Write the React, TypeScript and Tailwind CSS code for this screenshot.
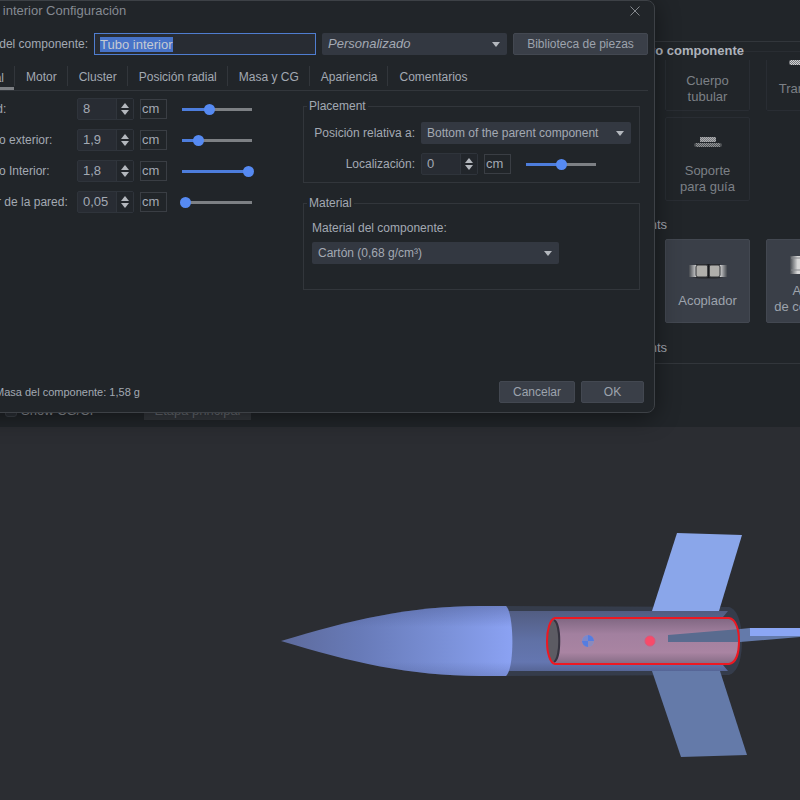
import { useEffect, useRef, useState } from 'react';
import type { ReactNode } from 'react';

interface SelectBoxProps {
  id: string;
  options: string[];
  className?: string;
  label?: string;
}

function SelectBox({ id, options, className = '', label }: SelectBoxProps) {
  return (
    <div className={`relative ${className}`}>
      <select
        id={id}
        aria-label={label}
        className="block h-[22px] w-full appearance-none rounded-[2px] bg-[#333841] pl-1.5 pr-5 outline-none"
      >
        {options.map((option) => (
          <option key={option}>{option}</option>
        ))}
      </select>
      <svg
        viewBox="0 0 8 5"
        className="pointer-events-none absolute right-[7px] top-[9px] h-[5px] w-2 fill-[#b4b8be]"
      >
        <path d="M0 0h8L4 5z" />
      </svg>
    </div>
  );
}

interface MeasureFieldProps {
  id: string;
  label: string;
  value: string;
  position: number;
}

function MeasureField({ id, label, value, position }: MeasureFieldProps) {
  const [text, setText] = useState(value);
  const [level, setLevel] = useState(position);

  return (
    <div className="flex h-[22px] items-center text-[13px]">
      <div className="flex h-[22px] w-[57px] rounded-[2px] border border-[#2f343b] bg-[#282c33]">
        <input
          id={id}
          type="text"
          value={text}
          onChange={(e) => setText(e.target.value)}
          className="w-[38px] bg-transparent pl-[5px] outline-none"
        />
        <div className="flex flex-1 flex-col items-center justify-center gap-0.5 border-l border-[#30353c] bg-[#22262b]">
          <button type="button" aria-label={`${label} +`}>
            <svg viewBox="0 0 8 5" className="block h-[5px] w-2 fill-[#b4b8be]">
              <path d="M0 5h8L4 0z" />
            </svg>
          </button>
          <button type="button" aria-label={`${label} -`}>
            <svg viewBox="0 0 8 5" className="block h-[5px] w-2 fill-[#b4b8be]">
              <path d="M0 0h8L4 5z" />
            </svg>
          </button>
        </div>
      </div>
      <button
        type="button"
        className="ml-1.5 h-5 w-[27px] border border-[#3a3e44] pl-px text-left"
      >
        cm
      </button>
      <input
        type="range"
        min={0}
        max={100}
        value={level}
        aria-label={label}
        onChange={(e) => setLevel(Number(e.target.value))}
        className="ml-[13px] h-[11px] w-[74px] appearance-none bg-[length:70px_3px] bg-center bg-no-repeat outline-none [&::-webkit-slider-thumb]:h-[11px] [&::-webkit-slider-thumb]:w-[11px] [&::-webkit-slider-thumb]:appearance-none [&::-webkit-slider-thumb]:rounded-full [&::-webkit-slider-thumb]:bg-[#568af2]"
        style={{
          backgroundImage: `linear-gradient(to right, #4d7ddc ${level}%, #7d8084 ${level}%)`,
        }}
      />
    </div>
  );
}

const measures = [
  { id: 'length', label: 'Longitud:', value: '8', position: 38 },
  { id: 'outer', label: 'Diámetro exterior:', value: '1,9', position: 20 },
  { id: 'inner', label: 'Diámetro Interior:', value: '1,8', position: 100 },
  { id: 'wall', label: 'Espesor de la pared:', value: '0,05', position: 0 },
];

const tabs = ['Motor', 'Cluster', 'Posición radial', 'Masa y CG', 'Apariencia', 'Comentarios'];

function ConfigDialog() {
  const nameRef = useRef<HTMLInputElement>(null);

  useEffect(() => {
    nameRef.current?.focus();
    nameRef.current?.select();
  }, []);

  return (
    <div
      role="dialog"
      aria-label="Tubo interior Configuración"
      className="absolute -left-[58px] right-[145px] top-0 rounded-lg border border-[#3d4146] bg-[#212529] pb-[9px] pl-[9px] pr-1.5 text-xs shadow-[0_4px_24px_rgba(0,0,0,0.45)]"
    >
      <div className="flex h-5 items-center justify-between pl-[18px] text-[13px] text-[#858a92]">
        <h1>Tubo interior Configuración</h1>
        <button type="button" aria-label="Cerrar" className="mr-2">
          <svg viewBox="0 0 10 10" className="h-2.5 w-2.5 stroke-[#84888d]" fill="none">
            <path d="M0.5 0.5l9 9M9.5 0.5l-9 9" />
          </svg>
        </button>
      </div>

      <div className="mt-3 flex items-center gap-1.5">
        <label htmlFor="name" className="flex w-[136px] justify-end whitespace-nowrap">
          Nombre del componente:
        </label>
        <input
          id="name"
          ref={nameRef}
          type="text"
          defaultValue="Tubo interior"
          className="h-[22px] min-w-0 flex-1 border border-[#4f7dd0] bg-[#282c33] px-[5px] text-[13px] outline-none selection:bg-[#4773c8] selection:text-[#c5cad2]"
        />
        <SelectBox
          id="preset"
          label="Personalizado"
          options={['Personalizado']}
          className="w-[185px] text-[13px] italic"
        />
        <button
          type="button"
          className="h-[22px] w-[135px] rounded-[2px] border border-[#434851] bg-[#3a3f48] text-[#9da3ad]"
        >
          Biblioteca de piezas
        </button>
      </div>

      <div role="tablist" className="mt-[11px] flex h-[25px] border-b border-[#32363b]">
        <button
          type="button"
          role="tab"
          aria-selected="true"
          className="w-[62px] border-b-[3px] border-[#7d8084] pr-2.5 pt-0.5 text-right"
        >
          General
        </button>
        {tabs.map((tab) => (
          <button
            key={tab}
            type="button"
            role="tab"
            aria-selected="false"
            className="mb-1 border-l border-[#32363b] pl-[11px] pr-2.5 pt-0.5"
          >
            {tab}
          </button>
        ))}
      </div>

      <div className="flex items-start justify-between pr-2 pt-[7px]">
        <div className="grid grid-cols-[114px_auto] items-center gap-x-1.5 gap-y-[9px] pl-[5px]">
          {measures.map((m) => (
            <div key={m.id} className="contents">
              <label htmlFor={m.id} className="whitespace-nowrap">
                {m.label}
              </label>
              <MeasureField {...m} />
            </div>
          ))}
        </div>

        <div className="w-[337px]">
          <fieldset className="border border-[#32363b] px-[7px] pb-[7px]">
            <legend className="-ml-1 px-0.5">Placement</legend>
            <div className="grid grid-cols-[104px_1fr] items-center gap-x-1.5 gap-y-[9px] pt-2">
              <label htmlFor="relative" className="whitespace-nowrap text-right">
                Posición relativa a:
              </label>
              <SelectBox
                id="relative"
                options={['Bottom of the parent component']}
                className="w-[210px]"
              />
              <label htmlFor="location" className="text-right">
                Localización:
              </label>
              <MeasureField id="location" label="Localización:" value="0" position={50} />
            </div>
          </fieldset>

          <fieldset className="mt-3 border border-[#32363b] px-2 pb-[25px]">
            <legend className="-ml-[5px] px-0.5">Material</legend>
            <label htmlFor="material" className="block pt-[9px]">
              Material del componente:
            </label>
            <SelectBox
              id="material"
              options={['Cartón (0,68 g/cm³)']}
              className="mt-1.5 w-[247px]"
            />
          </fieldset>
        </div>
      </div>

      <div className="mt-[91px] flex items-center gap-1.5 pr-1">
        <p className="flex-1 pl-[43px] text-[11px]">Masa del componente: 1,58 g</p>
        <button
          type="button"
          className="h-[22px] w-[76px] rounded-[2px] border border-[#434851] bg-[#3a3f48] text-[#9da3ad]"
        >
          Cancelar
        </button>
        <button
          type="button"
          className="h-[22px] w-[63px] rounded-[2px] border border-[#434851] bg-[#3a3f48] text-[#9da3ad]"
        >
          OK
        </button>
      </div>
    </div>
  );
}

function PartButton({ children, disabled }: { children: ReactNode; disabled?: boolean }) {
  return (
    <button
      type="button"
      disabled={disabled}
      className="flex h-[84px] w-[85px] shrink-0 flex-col items-center justify-end gap-2 rounded-[2px] border border-[#434851] bg-[#3a3f48] pb-[11px] leading-4 text-[#9da3ad] disabled:border-[#292d33] disabled:bg-transparent disabled:pb-[5px] disabled:text-[#7c8086]"
    >
      {children}
    </button>
  );
}

function CouplerIcon() {
  return (
    <svg viewBox="0 0 40 18" className="h-[18px] w-10">
      <defs>
        <linearGradient id="coupler" x1="0" x2="1">
          <stop offset="0" stopColor="#44484e" />
          <stop offset="0.2" stopColor="#d8d8d8" />
          <stop offset="0.8" stopColor="#e0e0e0" />
          <stop offset="1" stopColor="#44484e" />
        </linearGradient>
      </defs>
      <ellipse cx="20" cy="15" rx="15" ry="2" fill="#2f3238" />
      <path d="M1 3h38v12H1z" fill="url(#coupler)" />
      <path d="M8 2.5h24M8 15.5h24" stroke="#24272b" />
      <rect x="8" y="3" width="12" height="12" rx="2" fill="#b0afab" stroke="#303236" />
      <rect x="21" y="3" width="11" height="12" rx="2" fill="#b0afab" stroke="#303236" />
      <path d="M20.5 2v14" stroke="#17191c" strokeWidth="2" />
    </svg>
  );
}

function LugIcon() {
  return (
    <svg viewBox="0 0 30 12" className="h-3 w-[30px]">
      <defs>
        <pattern id="dots" width="2" height="2" patternUnits="userSpaceOnUse">
          <path d="M0 0h1v1H0zM1 1h1v1H1z" fill="#d0d2d4" />
        </pattern>
      </defs>
      <rect x="7" y="1" width="16" height="5" rx="1" fill="#77797c" />
      <rect x="7" y="1" width="16" height="5" fill="url(#dots)" opacity="0.6" />
      <rect x="1" y="7" width="28" height="4" rx="2" fill="#505356" />
      <rect x="3" y="7" width="24" height="4" fill="url(#dots)" opacity="0.5" />
    </svg>
  );
}

function TransitionIcon() {
  return (
    <svg viewBox="0 0 42 10" className="h-2.5 w-[42px]">
      <rect x="1" y="1" width="40" height="5" rx="2" fill="#77797c" />
      <rect x="2" y="1" width="38" height="5" fill="url(#dots)" />
    </svg>
  );
}

function PartsPanel() {
  return (
    <section className="ml-auto w-[145px] pt-[41px]">
      <div className="border-y border-[#32363b] pb-[7px]">
        <div className="flex h-[18px] items-center">
          <h2 className="flex w-[89px] shrink-0 justify-end whitespace-nowrap font-bold text-[#aeb3bc]">
            nuevo componente
          </h2>
          <div className="h-px flex-1 bg-[#292d32]" />
        </div>
        {/* first row is scrolled under the header */}
        <div className="flex h-[51px] items-end gap-4 overflow-hidden pl-2.5">
          <PartButton disabled>
            Cuerpo
            <br />
            tubular
          </PartButton>
          <PartButton disabled>
            <TransitionIcon />
            <span className="pb-2 pt-1">Transición</span>
          </PartButton>
        </div>
        <div className="mt-[6px] flex pl-2.5">
          <PartButton disabled>
            <LugIcon />
            <span className="pt-[7px]">
              Soporte
              <br />
              para guía
            </span>
          </PartButton>
        </div>
        <h3 className="mt-4 flex w-3 justify-end leading-4">components</h3>
        <div className="mt-1.5 flex gap-4 overflow-hidden pl-2.5">
          <PartButton>
            <CouplerIcon />
            <span className="pb-0.5 pt-[5px]">Acoplador</span>
          </PartButton>
          <PartButton>
            <svg viewBox="0 0 34 20" className="h-5 w-[38px]" preserveAspectRatio="none">
              <path d="M0 1h34v18H0z" fill="url(#coupler)" />
              <path d="M1 3h32M1 15h32" stroke="#85888c" />
            </svg>
            <span className="-mb-1">
              Anillo
              <br />
              de centrado
            </span>
          </PartButton>
        </div>
        <h3 className="mt-[17px] flex w-3 justify-end leading-4">components</h3>
      </div>
    </section>
  );
}

function RocketView() {
  return (
    <svg viewBox="0 427 800 373" className="block w-full bg-[#2b2d32]">
      <defs>
        <linearGradient id="nose" x1="0" x2="1">
          <stop offset="0" stopColor="#5d6a9b" />
          <stop offset="0.35" stopColor="#687bb9" />
          <stop offset="0.7" stopColor="#7a90d7" />
          <stop offset="1" stopColor="#8ba2f3" />
        </linearGradient>
        <linearGradient id="noseShade" x1="0" y1="0" x2="0" y2="1">
          <stop offset="0" stopColor="#3d4a7a" stopOpacity="0.35" />
          <stop offset="0.3" stopColor="#3d4a7a" stopOpacity="0" />
          <stop offset="0.8" stopColor="#3d4a7a" stopOpacity="0" />
          <stop offset="1" stopColor="#3d4a7a" stopOpacity="0.25" />
        </linearGradient>
        <linearGradient id="body" x1="0" y1="0" x2="0" y2="1">
          <stop offset="0" stopColor="#525d82" />
          <stop offset="0.5" stopColor="#6071a6" />
          <stop offset="0.85" stopColor="#6476b0" />
          <stop offset="1" stopColor="#566596" />
        </linearGradient>
        <linearGradient id="tube" x1="0" y1="0" x2="0" y2="1">
          <stop offset="0" stopColor="#806782" />
          <stop offset="0.35" stopColor="#a2809f" />
          <stop offset="0.75" stopColor="#a984a2" />
          <stop offset="1" stopColor="#846b84" />
        </linearGradient>
      </defs>

      <path d="M506 606L729 607C738 609 742 625 742 641C742 658 738 672 729 675L506 676z" fill="#353c4b" />
      <path d="M506 611H728L723 617V665L728 671H506z" fill="url(#body)" />

      <path d="M281 641C350 620 410 606 480 606H506C514 613 515 668 506 676H480C410 676 350 662 281 641z" fill="url(#nose)" />
      <path d="M281 641C350 620 410 606 480 606H506C514 613 515 668 506 676H480C410 676 350 662 281 641z" fill="url(#noseShade)" />

      <path d="M677 533L742 535L719 611H652z" fill="#8aa6ea" />
      <path d="M652 671H720L747 755L681 757z" fill="#647aa9" />

      <path d="M555 618H729C736 619 739 630 739 641C739 653 736 663 729 664H555C550 663 547 653 547 641C547 630 550 619 555 618z" fill="url(#tube)" />
      <ellipse cx="553" cy="641" rx="6" ry="21" fill="#5c5b63" />
      <path d="M554 620C561 624 561 658 554 662" fill="none" stroke="#35333f" strokeWidth="2" />
      <path d="M668 635L740 629V642H668z" fill="#596b8f" />
      <path d="M740 629L750 628V636H800V637L740 642z" fill="#647aaa" />
      <path d="M750 628H800V636H750z" fill="#8ba6f4" />
      <path
        d="M555 618H729C736 619 739 630 739 641C739 653 736 663 729 664H555C550 663 547 653 547 641C547 630 550 619 555 618z"
        fill="none"
        stroke="#ed1822"
        strokeWidth="2"
      />

      {/* centre of gravity */}
      <circle cx="588" cy="641" r="6" fill="#a78fb2" />
      <path d="M588 641V635A6 6 0 0 1 594 641zM588 641V647A6 6 0 0 1 582 641z" fill="#557de0" />
      <path d="M588 641H582A6 6 0 0 1 588 635z" fill="#7b88cb" />
      <path d="M588 641H594A6 6 0 0 1 588 647z" fill="#8b8abc" />
      {/* centre of pressure */}
      <circle cx="650" cy="641" r="5" fill="#f84a69" stroke="#d8587a" />
    </svg>
  );
}

export default function App() {
  return (
    <main className="relative flex min-h-screen flex-col overflow-hidden bg-[#2b2d32] font-['Liberation_Sans',Arial,sans-serif] text-[13px] leading-4 text-[#a3a9b3]">
      <div className="bg-[#212529] pb-[7px]">
        <PartsPanel />
        <div className="mt-[34px] flex h-[22px] items-center">
          <label className="flex w-[144px] items-center gap-1 pl-[5px] pt-1 text-[#8a8e94]">
            <input
              type="checkbox"
              className="h-3 w-3 appearance-none rounded-[3px] border border-[#3a3f46] bg-[#2b3036]"
            />
            Show CG/CP
          </label>
          <button
            type="button"
            disabled
            className="h-[22px] w-[107px] bg-[#33373c] pt-1 text-[#666a70]"
          >
            Etapa principal
          </button>
        </div>
      </div>
      <RocketView />
      <ConfigDialog />
    </main>
  );
}
